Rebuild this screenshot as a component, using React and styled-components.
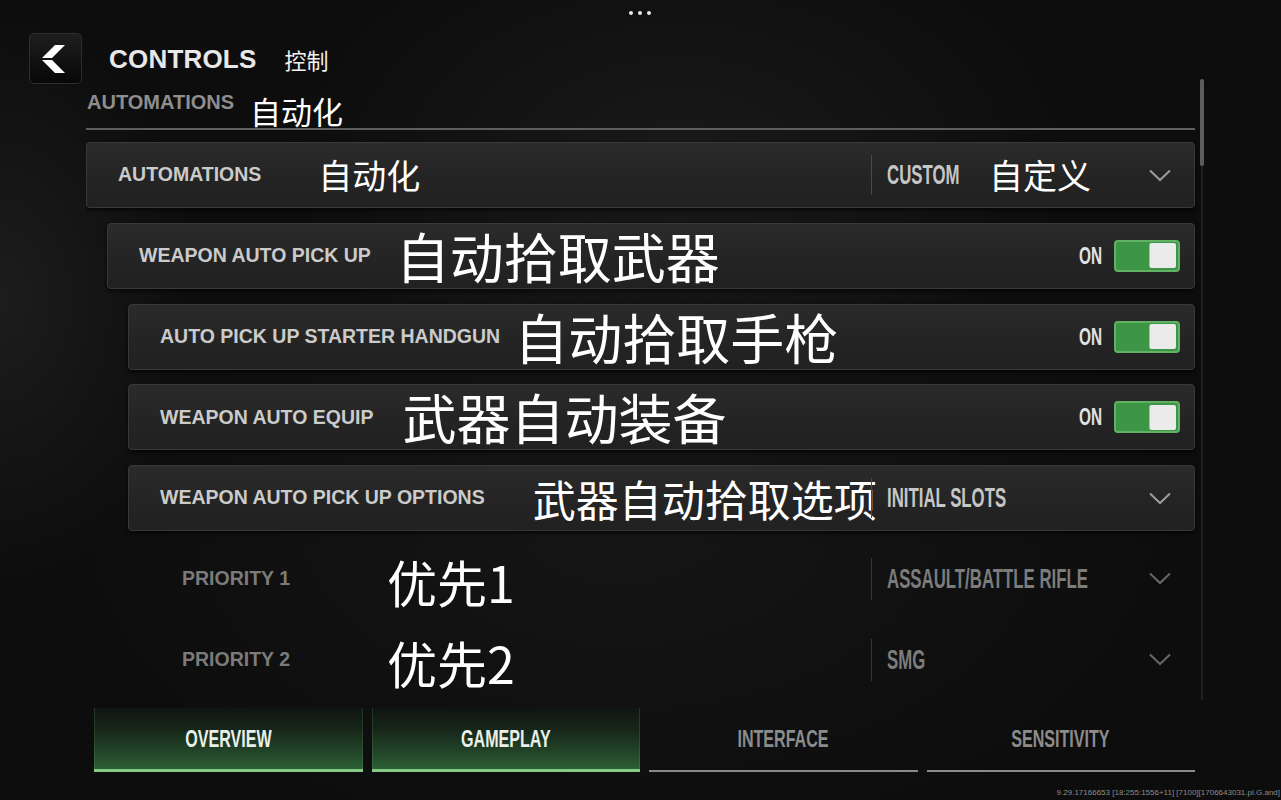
import React from 'react';
import styled, { createGlobalStyle, css } from 'styled-components';

const LATIN = `"Liberation Sans", Arial, sans-serif`;
const CJK = `"Noto Sans CJK SC", "Liberation Sans", sans-serif`;

const Global = createGlobalStyle`
  html, body { margin: 0; padding: 0; background: #0e0e0e; }
  body { font-family: ${LATIN}; }
  * { box-sizing: border-box; }
`;

const Page = styled.div`
  position: relative;
  width: 1281px;
  height: 800px;
  overflow: hidden;
  display: flex;
  flex-direction: column;
  background:
    radial-gradient(ellipse 260px 380px at 0px 300px, rgba(70, 70, 70, 0.28), transparent 75%),
    radial-gradient(ellipse 520px 320px at 680px 160px, rgba(40, 40, 40, 0.45), transparent 75%),
    radial-gradient(ellipse 700px 420px at 620px 520px, rgba(30, 30, 30, 0.5), transparent 80%),
    #0d0d0d;
`;

const Dots = styled.div`
  position: absolute;
  top: 11px;
  left: 629px;
  display: flex;
  gap: 5px;
`;

const Dot = styled.span`
  width: 4px;
  height: 4px;
  border-radius: 50%;
  background: #e8e8e8;
`;

const Header = styled.header`
  display: flex;
  align-items: center;
  padding: 33px 0 0 29px;
`;

const BackButton = styled.button`
  width: 53px;
  height: 51px;
  border: 1px solid #2e2e2e;
  border-radius: 5px;
  background: linear-gradient(180deg, #1e1e1e 0%, #070707 100%);
  display: flex;
  align-items: center;
  justify-content: center;
  padding: 0 4px 0 0;
`;

const Title = styled.h1`
  margin: 0 0 0 27px;
  font: 700 26px/1 ${LATIN};
  color: #e8e8e8;
  letter-spacing: 0.2px;
`;

const TitleCn = styled.span`
  margin-left: 28px;
  font: 400 22px/1 ${CJK};
  color: #f2f2f2;
`;

const Main = styled.main`
  display: flex;
  margin: -5px 0 0 86px;
  height: 621px;
  overflow: hidden;
`;

const Content = styled.div`
  width: 1109px;
  display: flex;
  flex-direction: column;
`;

const SectionHeader = styled.div`
  display: flex;
  align-items: flex-start;
  padding: 13px 0 2px 1px;
  border-bottom: 2px solid #5e5e5e;
`;

const SectionLabel = styled.span`
  font: 700 20px/1 ${LATIN};
  color: #8e8e8e;
`;

const List = styled.div`
  display: flex;
  flex-direction: column;
  gap: 14.8px;
  margin-top: 12px;
`;

const Row = styled.div`
  display: flex;
  align-items: center;
  height: 66px;
  flex: none;
  margin-left: ${p => p.$indent || 0}px;
  border-radius: 4px;
  border: 1px solid transparent;
  ${p => !p.$plain && css`
    background: linear-gradient(180deg, #2b2b2b 0%, #242424 55%, #212121 100%);
    border-color: #393939;
    box-shadow: 0 2px 4px rgba(0, 0, 0, 0.7);
  `}
`;

const LeftArea = styled.div`
  flex: 1 1 0;
  min-width: 0;
  display: flex;
  align-items: center;
  padding-left: 31px;
  height: 100%;
`;

const Label = styled.span`
  flex: none;
  white-space: nowrap;
  font: 700 19.5px/1 ${LATIN};
  color: ${p => (p.$dim ? '#7b7b7b' : '#cbcbcb')};
`;

const Annotation = styled.span`
  flex: none;
  white-space: nowrap;
  font: 400 ${p => p.$size}px/1 ${CJK};
  color: #ffffff;
  margin-left: ${p => p.$gap || 0}px;
  margin-top: ${p => p.$drop || 0}px;
`;

const ValueCell = styled.div`
  flex: none;
  width: 323px;
  height: 100%;
  display: flex;
  align-items: center;
`;

const Divider = styled.span`
  flex: none;
  width: 1px;
  height: ${p => p.$h || 40}px;
  background: ${p => (p.$dim ? '#363636' : '#4a4a4a')};
  margin-right: 15px;
`;

const ValueSlot = styled.span`
  flex: ${p => (p.$w ? 'none' : '1 1 0')};
  width: ${p => (p.$w ? `${p.$w}px` : 'auto')};
  min-width: 0;
  display: flex;
  align-items: center;
`;

const Cond = styled.span`
  display: inline-block;
  white-space: nowrap;
  font: 700 ${p => p.$size || 28}px/1 ${LATIN};
  transform: scaleX(${p => p.$scale || 0.6});
  transform-origin: ${p => p.$origin || 'left'} center;
  color: ${p => p.$color || '#c6c6c6'};
`;

const ChevronWrap = styled.span`
  flex: none;
  margin-left: auto;
  margin-right: 23px;
  display: flex;
`;

const ToggleCell = styled.div`
  margin-left: auto;
  padding-right: 14px;
  display: flex;
  align-items: center;
`;

const OnText = styled.span`
  margin-right: 12px;
  display: flex;
`;

const Toggle = styled.div`
  width: 66px;
  height: 32px;
  border: 2px solid #62b266;
  border-radius: 4px;
  background: #3c9646;
  display: flex;
  justify-content: flex-end;
  align-items: center;
  padding: 0 2px;
`;

const Knob = styled.div`
  width: 26px;
  height: 25px;
  border-radius: 2px;
  background: #ebebeb;
  box-shadow: -1px 0 0 #8fcf92;
`;

const Scrollbar = styled.div`
  flex: none;
  width: 2px;
  margin-left: 6px;
  background: #1f1f1f;
  display: flex;
  flex-direction: column;
  align-items: center;
`;

const Thumb = styled.div`
  flex: none;
  width: 4px;
  height: 87px;
  border-radius: 2px;
  background: #5c5c5c;
`;

const TabBar = styled.nav`
  display: flex;
  gap: 9px;
  width: 1101px;
  height: 64px;
  margin: 8px 0 0 94px;
`;

const Tab = styled.div`
  flex: 1 1 0;
  display: flex;
  align-items: center;
  justify-content: center;
  ${p => p.$active ? css`
    background: linear-gradient(180deg, #0f1511 0%, #172619 35%, #23472a 75%, #2d5f34 100%);
    border-bottom: 3px solid #86c987;
    box-shadow: inset 1px 0 0 rgba(120, 190, 120, 0.18), inset -1px 0 0 rgba(120, 190, 120, 0.18);
  ` : css`
    border-bottom: 2px solid #8a8a8a;
  `}
`;

const Footer = styled.div`
  display: flex;
  justify-content: flex-end;
  margin-top: 16px;
  padding-right: 1px;
`;

const Version = styled.span`
  font: 400 8px/10px ${LATIN};
  color: #8c8c8c;
  white-space: nowrap;
`;

function BackChevron() {
  return (
    <svg width="24" height="28" viewBox="0 0 24 28">
      <polygon points="13,0 23,0 10,13 0,13" fill="#ffffff" />
      <polygon points="0,15 10,15 23,28 13,28" fill="#ffffff" />
    </svg>
  );
}

function Chevron({ color = '#9c9c9c' }) {
  return (
    <svg width="22" height="13" viewBox="0 0 22 13">
      <polyline points="1,1.5 11,11 21,1.5" fill="none" stroke={color} strokeWidth="2" />
    </svg>
  );
}

function ToggleRow({ indent, label, cn, gap }) {
  return (
    <Row $indent={indent}>
      <LeftArea>
        <Label>{label}</Label>
        <Annotation $size={54} $gap={gap}>{cn}</Annotation>
      </LeftArea>
      <ToggleCell>
        <OnText>
          <Cond $size={24} $scale={0.64} $origin="right" $color="#e2e2e2">ON</Cond>
        </OnText>
        <Toggle>
          <Knob />
        </Toggle>
      </ToggleCell>
    </Row>
  );
}

function PriorityRow({ label, cn, value }) {
  return (
    <Row $indent={64} $plain>
      <LeftArea>
        <Label $dim>{label}</Label>
        <Annotation $size={50} $gap={97} $drop={4}>{cn}</Annotation>
      </LeftArea>
      <ValueCell>
        <Divider $h={42} $dim />
        <ValueSlot>
          <Cond $color="#7c7c7c">{value}</Cond>
        </ValueSlot>
        <ChevronWrap>
          <Chevron color="#676767" />
        </ChevronWrap>
      </ValueCell>
    </Row>
  );
}

const tabs = [
  { name: 'OVERVIEW', active: true },
  { name: 'GAMEPLAY', active: true },
  { name: 'INTERFACE', active: false },
  { name: 'SENSITIVITY', active: false },
];

export default function App() {
  return (
    <>
      <Global />
      <Page>
        <Dots>
          <Dot />
          <Dot />
          <Dot />
        </Dots>

        <Header>
          <BackButton aria-label="back">
            <BackChevron />
          </BackButton>
          <Title>CONTROLS</Title>
          <TitleCn>控制</TitleCn>
        </Header>

        <Main>
          <Content>
            <SectionHeader>
              <SectionLabel>AUTOMATIONS</SectionLabel>
              <Annotation $size={31} $gap={16} $drop={3}>自动化</Annotation>
            </SectionHeader>

            <List>
              <Row $indent={0}>
                <LeftArea>
                  <Label>AUTOMATIONS</Label>
                  <Annotation $size={34} $gap={57}>自动化</Annotation>
                </LeftArea>
                <ValueCell>
                  <Divider $h={40} />
                  <ValueSlot $w={102}>
                    <Cond>CUSTOM</Cond>
                  </ValueSlot>
                  <Annotation $size={34}>自定义</Annotation>
                  <ChevronWrap>
                    <Chevron />
                  </ChevronWrap>
                </ValueCell>
              </Row>

              <ToggleRow indent={21} label="WEAPON AUTO PICK UP" cn="自动拾取武器" gap={25} />
              <ToggleRow indent={42} label="AUTO PICK UP STARTER HANDGUN" cn="自动拾取手枪" gap={14} />
              <ToggleRow indent={42} label="WEAPON AUTO EQUIP" cn="武器自动装备" gap={29} />

              <Row $indent={42}>
                <LeftArea>
                  <Label>WEAPON AUTO PICK UP OPTIONS</Label>
                  <Annotation $size={43} $gap={48}>武器自动拾取选项</Annotation>
                </LeftArea>
                <ValueCell>
                  <Divider $h={40} />
                  <ValueSlot>
                    <Cond>INITIAL SLOTS</Cond>
                  </ValueSlot>
                  <ChevronWrap>
                    <Chevron />
                  </ChevronWrap>
                </ValueCell>
              </Row>

              <PriorityRow label="PRIORITY 1" cn="优先1" value="ASSAULT/BATTLE RIFLE" />
              <PriorityRow label="PRIORITY 2" cn="优先2" value="SMG" />
            </List>
          </Content>
          <Scrollbar>
            <Thumb />
          </Scrollbar>
        </Main>

        <TabBar>
          {tabs.map(t => (
            <Tab key={t.name} $active={t.active}>
              <Cond
                $size={24}
                $scale={0.67}
                $origin="center"
                $color={t.active ? '#e9efe9' : '#8c8c8c'}
              >
                {t.name}
              </Cond>
            </Tab>
          ))}
        </TabBar>

        <Footer>
          <Version>9.29.17166653 [18:255:1556+11] [7100][1706643031.pl.G.and]</Version>
        </Footer>
      </Page>
    </>
  );
}
